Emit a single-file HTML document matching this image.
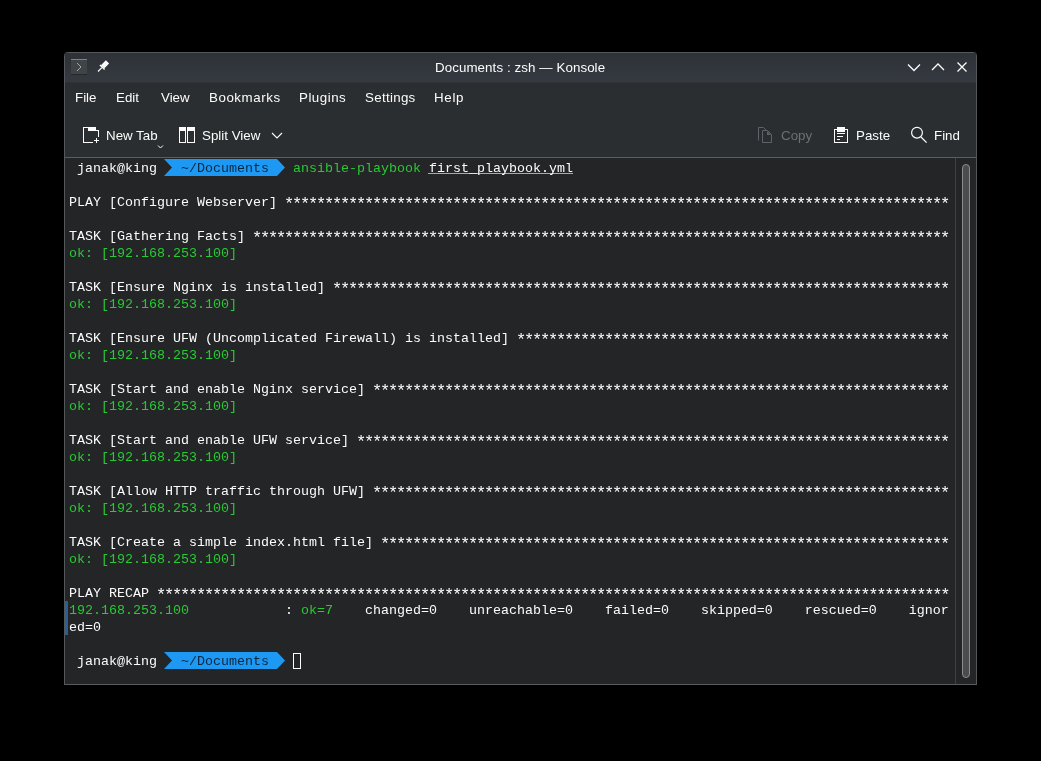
<!DOCTYPE html>
<html><head><meta charset="utf-8"><style>
html,body{margin:0;padding:0;background:#000;width:1041px;height:761px;overflow:hidden;position:relative}
.abs{position:absolute}
.txt{position:absolute;left:0;top:0;width:1041px;height:761px;will-change:transform}
.ui{position:absolute;font-family:"Liberation Sans",sans-serif;font-size:13.333px;white-space:pre;line-height:16px}
.row{position:absolute;font-family:"Liberation Mono",monospace;font-size:13.333px;line-height:17px;height:17px;color:#fcfcfc;white-space:pre}
.st{font-size:17px;line-height:0;letter-spacing:-2.2px;position:relative;top:3px;left:-1px}
.ul{text-decoration:underline;text-underline-offset:2px;text-decoration-thickness:1px}
</style></head><body>

<svg class="abs" style="left:0;top:0" width="1041" height="761" viewBox="0 0 1041 761">
<!-- window frame -->
<path d="M64.5,685 V55.5 Q64.5,52.5 67.5,52.5 H973.5 Q976.5,52.5 976.5,55.5 V685" fill="#2b2e30" stroke="#55585b" stroke-width="1"/>
<defs><linearGradient id="tg" x1="0" y1="0" x2="0" y2="1"><stop offset="0" stop-color="#2e3237"/><stop offset="1" stop-color="#353a41"/></linearGradient></defs>
<rect x="65" y="53" width="911" height="29" fill="url(#tg)"/>
<rect x="65" y="82" width="911" height="1" fill="#2f3237"/>
<line x1="64.5" y1="684.5" x2="976.5" y2="684.5" stroke="#5a5c5e"/>
<!-- terminal -->
<rect x="65" y="158" width="911" height="526" fill="#242527"/>
<line x1="65" y1="157.5" x2="976" y2="157.5" stroke="#5a5d61"/>
<line x1="955.5" y1="158" x2="955.5" y2="684" stroke="#3e4144"/>
<rect x="962.5" y="164.5" width="7" height="513" rx="3.5" ry="3.5" fill="#4b4c4e" stroke="#8a8c8e" stroke-width="1"/>
<rect x="65" y="601" width="3" height="34" fill="#285f96"/>
<polygon points="164,159 277,159 285,167.5 277,176 164,176 172,167.5" fill="#1d99f3"/>
<polygon points="164,652 277,652 285,660.5 277,669 164,669 172,660.5" fill="#1d99f3"/>
<rect x="428" y="173" width="145" height="1" fill="#a9aaab"/>
<rect x="293.5" y="653.5" width="7" height="15" fill="none" stroke="#fcfcfc" stroke-width="1"/>
<!-- app icon -->
<rect x="71" y="59" width="16" height="15" fill="#3f4446"/>
<rect x="71" y="59" width="16" height="1" fill="#7d8285"/>
<rect x="71" y="74" width="16" height="1" fill="#25282b"/>
<polyline points="77,63 81,67 77,71" fill="none" stroke="#a6aaac" stroke-width="1"/>
<!-- pin -->
<g transform="translate(101.5,68) rotate(45)" fill="#fcfcfc">
<rect x="-2.3" y="-8.5" width="4.6" height="7"/>
<rect x="-3.3" y="-1.8" width="6.6" height="1.4"/>
<rect x="-0.6" y="-0.5" width="1.2" height="5.5"/>
</g>
<!-- window buttons -->
<polyline points="908,64.5 914,70.5 920,64.5" fill="none" stroke="#fcfcfc" stroke-width="1.3"/>
<polyline points="932,70 938,64 944,70" fill="none" stroke="#fcfcfc" stroke-width="1.3"/>
<path d="M957.5,62.5 L966.5,71.5 M966.5,62.5 L957.5,71.5" fill="none" stroke="#fcfcfc" stroke-width="1.3"/>
<!-- new tab icon -->
<g transform="translate(83,127)" fill="#fcfcfc">
<rect x="0" y="0" width="1" height="16"/>
<rect x="0" y="0" width="13" height="1"/>
<rect x="5" y="0" width="8" height="4"/>
<rect x="13" y="3" width="3" height="1"/>
<rect x="15" y="3" width="1" height="7"/>
<rect x="0" y="15" width="10" height="1"/>
<rect x="11" y="13" width="5" height="1"/>
<rect x="13" y="11" width="1" height="5"/>
</g>
<polyline points="158,145.5 160.5,148 163,145.5" fill="none" stroke="#fcfcfc" stroke-width="1"/>
<!-- split view icon -->
<g transform="translate(179,127)" fill="none" stroke="#fcfcfc" stroke-width="1">
<rect x="0.5" y="0.5" width="6" height="15"/>
<rect x="8.5" y="0.5" width="7" height="15"/>
</g>
<rect x="179" y="127" width="7" height="4" fill="#fcfcfc"/>
<rect x="187" y="127" width="8" height="4" fill="#fcfcfc"/>
<polyline points="272,133 277,138 282,133" fill="none" stroke="#fcfcfc" stroke-width="1.1"/>
<!-- copy icon -->
<g fill="none" stroke="#5f6367" stroke-width="1">
<path d="M758.5,140.5 V127.5 H763.5 L766,130"/>
<path d="M762.5,142.5 V130.5 H767.5 L771.5,134.5 V142.5 Z"/>
</g>
<polygon points="767,131 771,135 767,135" fill="#5f6367"/>
<!-- paste icon -->
<g transform="translate(834,127)">
<rect x="0.5" y="2.5" width="13" height="13" fill="none" stroke="#fcfcfc" stroke-width="1"/>
<rect x="3" y="0" width="8" height="5" fill="#fcfcfc"/>
<rect x="3" y="6" width="8" height="1" fill="#fcfcfc"/>
<rect x="3" y="9" width="6" height="1" fill="#fcfcfc"/>
<rect x="3" y="12" width="3" height="1" fill="#fcfcfc"/>
</g>
<!-- find icon -->
<circle cx="917" cy="132.7" r="5.4" fill="none" stroke="#fcfcfc" stroke-width="1.2"/>
<line x1="921" y1="137" x2="926.6" y2="142.6" stroke="#fcfcfc" stroke-width="1.3"/>
</svg>
<div class="txt">
<div class="ui" style="left:435px;top:60px;color:#fcfcfc;letter-spacing:0.08px">Documents : zsh — Konsole</div>
<div class="ui" style="left:75px;top:90px;color:#fcfcfc;letter-spacing:0px">File</div>
<div class="ui" style="left:116px;top:90px;color:#fcfcfc;letter-spacing:0px">Edit</div>
<div class="ui" style="left:161px;top:90px;color:#fcfcfc;letter-spacing:0px">View</div>
<div class="ui" style="left:209px;top:90px;color:#fcfcfc;letter-spacing:0.55px">Bookmarks</div>
<div class="ui" style="left:299px;top:90px;color:#fcfcfc;letter-spacing:0.5px">Plugins</div>
<div class="ui" style="left:365px;top:90px;color:#fcfcfc;letter-spacing:0.3px">Settings</div>
<div class="ui" style="left:434px;top:90px;color:#fcfcfc;letter-spacing:0.7px">Help</div>
<div class="ui" style="left:106px;top:128px;color:#fcfcfc;letter-spacing:0px">New Tab</div>
<div class="ui" style="left:202px;top:128px;color:#fcfcfc;letter-spacing:0px">Split View</div>
<div class="ui" style="left:781px;top:128px;color:#6d7074;letter-spacing:0px">Copy</div>
<div class="ui" style="left:856px;top:128px;color:#fcfcfc;letter-spacing:0px">Paste</div>
<div class="ui" style="left:934px;top:128px;color:#fcfcfc;letter-spacing:0px">Find</div>
<div class="row" style="top:194px;left:69px">PLAY [Configure Webserver] <span class="st">***********************************************************************************</span></div>
<div class="row" style="top:228px;left:69px">TASK [Gathering Facts] <span class="st">***************************************************************************************</span></div>
<div class="row" style="top:245px;left:69px"><span style="color:#28c934">ok: [192.168.253.100]</span></div>
<div class="row" style="top:279px;left:69px">TASK [Ensure Nginx is installed] <span class="st">*****************************************************************************</span></div>
<div class="row" style="top:296px;left:69px"><span style="color:#28c934">ok: [192.168.253.100]</span></div>
<div class="row" style="top:330px;left:69px">TASK [Ensure UFW (Uncomplicated Firewall) is installed] <span class="st">******************************************************</span></div>
<div class="row" style="top:347px;left:69px"><span style="color:#28c934">ok: [192.168.253.100]</span></div>
<div class="row" style="top:381px;left:69px">TASK [Start and enable Nginx service] <span class="st">************************************************************************</span></div>
<div class="row" style="top:398px;left:69px"><span style="color:#28c934">ok: [192.168.253.100]</span></div>
<div class="row" style="top:432px;left:69px">TASK [Start and enable UFW service] <span class="st">**************************************************************************</span></div>
<div class="row" style="top:449px;left:69px"><span style="color:#28c934">ok: [192.168.253.100]</span></div>
<div class="row" style="top:483px;left:69px">TASK [Allow HTTP traffic through UFW] <span class="st">************************************************************************</span></div>
<div class="row" style="top:500px;left:69px"><span style="color:#28c934">ok: [192.168.253.100]</span></div>
<div class="row" style="top:534px;left:69px">TASK [Create a simple index.html file] <span class="st">***********************************************************************</span></div>
<div class="row" style="top:551px;left:69px"><span style="color:#28c934">ok: [192.168.253.100]</span></div>
<div class="row" style="top:585px;left:69px">PLAY RECAP <span class="st">***************************************************************************************************</span></div>
<div class="row" style="top:602px;left:69px"><span style="color:#28c934">192.168.253.100</span>            : <span style="color:#28c934">ok=7</span>    changed=0    unreachable=0    failed=0    skipped=0    rescued=0    ignor</div>
<div class="row" style="top:619px;left:69px">ed=0</div>
<div class="row" style="top:160px;left:69px"> janak@king</div>
<div class="row" style="top:160px;left:181px;color:#0d2640">~/Documents</div>
<div class="row" style="top:160px;left:293px"><span style="color:#28c934">ansible-playbook</span> first_playbook.yml</div>
<div class="row" style="top:653px;left:69px"> janak@king</div>
<div class="row" style="top:653px;left:181px;color:#0d2640">~/Documents</div>
</div>
</body></html>
